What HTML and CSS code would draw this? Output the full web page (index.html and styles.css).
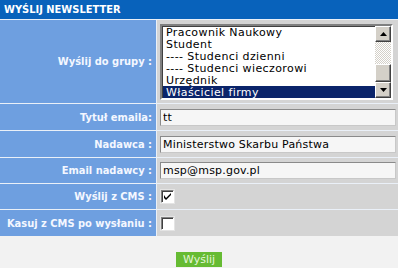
FILE: index.html
```html
<!DOCTYPE html>
<html lang="pl">

<head>
    <meta charset="UTF-8">
    <title>Wyślij newsletter</title>
    <link rel="stylesheet" href="styles.css">
</head>

<body>
    <div class="panel">
        <div class="panel-head">WYŚLIJ NEWSLETTER</div>

        <!-- Group list -->
        <div class="label">Wyślij do grupy :</div>
        <div class="field">
            <div class="listbox">
                <ul class="list-items">
                    <li>Pracownik Naukowy</li>
                    <li>Student</li>
                    <li>---- Studenci dzienni</li>
                    <li>---- Studenci wieczorowi</li>
                    <li>Urzędnik</li>
                    <li class="selected">Właściciel firmy</li>
                </ul>
                <div class="scrollbar">
                    <div class="sb-btn">
                        <svg width="7" height="4" viewBox="0 0 7 4"><path d="M3.5 0 L7 4 L0 4 Z" fill="#000"/></svg>
                    </div>
                    <div class="sb-track"></div>
                    <div class="sb-thumb"></div>
                    <div class="sb-btn">
                        <svg width="7" height="4" viewBox="0 0 7 4"><path d="M0 0 L7 0 L3.5 4 Z" fill="#000"/></svg>
                    </div>
                </div>
            </div>
        </div>

        <div class="label">Tytuł emaila:</div>
        <div class="field"><input type="text" class="text-input" value="tt"></div>

        <div class="label">Nadawca :</div>
        <div class="field"><input type="text" class="text-input" value="Ministerstwo Skarbu Państwa"></div>

        <div class="label">Email nadawcy :</div>
        <div class="field"><input type="text" class="text-input" value="msp@msp.gov.pl"></div>

        <div class="label">Wyślij z CMS :</div>
        <div class="field">
            <span class="checkbox">
                <svg width="7" height="7" viewBox="0 0 7 7"><path d="M0 2 L0 5 L2 7 L7 2 L7 0 L2 5 Z" fill="#000"/></svg>
            </span>
        </div>

        <div class="label">Kasuj z CMS po wysłaniu :</div>
        <div class="field"><span class="checkbox"></span></div>
    </div>

    <div class="actions">
        <button class="send-button">Wyślij</button>
    </div>
</body>

</html>
```

FILE: styles.css
```css
body {
    margin: 0;
    padding: 0;
    background-color: #f2f2f2;
    font-family: "DejaVu Sans", Verdana, sans-serif;
    font-size: 11px;
}

.panel {
    display: grid;
    grid-template-columns: 156px 1fr;
    grid-template-rows: 19px 83px 26px 26px 25px 25px 26px;
    gap: 1px;
    background-color: #eaf0f8;
}

.panel-head {
    grid-column: 1 / 3;
    background-color: #0862bb;
    color: #ffffff;
    font-family: "DejaVu Sans Condensed", "DejaVu Sans", sans-serif;
    font-weight: bold;
    font-size: 11px;
    padding-left: 4px;
    display: flex;
    align-items: center;
}

.label {
    background-color: #6e9fe0;
    color: #f4f7ff;
    font-family: "DejaVu Sans Condensed", "DejaVu Sans", sans-serif;
    font-weight: bold;
    font-size: 11px;
    display: flex;
    align-items: center;
    justify-content: flex-end;
    padding-right: 4px;
}

.field {
    background-color: #d4d4d4;
    display: flex;
    align-items: center;
    padding-left: 3px;
}

/* list box */
.listbox {
    display: flex;
    width: 229px;
    height: 72px;
    border: 2px solid;
    border-color: #808080 #ffffff #ffffff #808080;
    box-shadow: inset 1px 1px 0 #404040;
    background-color: #ffffff;
}

.list-items {
    flex: 1;
    list-style: none;
    margin: 0;
    padding: 0 0 0 1px;
    color: #000;
    letter-spacing: 0.4px;
}

.list-items li {
    height: 12px;
    line-height: 13px;
    padding-left: 3px;
    white-space: nowrap;
}

.list-items li.selected {
    background-color: #0a246a;
    color: #ffffff;
}

.scrollbar {
    width: 16px;
    display: flex;
    flex-direction: column;
}

.sb-btn,
.sb-thumb {
    box-sizing: border-box;
    height: 16px;
    background-color: #d4d0c8;
    border: 1px solid;
    border-color: #ffffff #404040 #404040 #ffffff;
    box-shadow: inset -1px -1px 0 #808080;
    display: flex;
    align-items: center;
    justify-content: center;
}

.sb-track {
    flex: 1;
    background-image: conic-gradient(#d4d0c8 25%, #ffffff 0 50%, #d4d0c8 0 75%, #ffffff 0);
    background-size: 2px 2px;
}

.sb-thumb {
    height: 18px;
}

/* inputs */
.text-input {
    box-sizing: border-box;
    width: 236px;
    height: 17px;
    margin: 0;
    padding: 0 2px;
    border: 1px solid;
    border-color: #8a8a8a #c8c8c8 #c8c8c8 #8a8a8a;
    background-color: #f6f6f6;
    font-family: "DejaVu Sans", Verdana, sans-serif;
    font-size: 11px;
    letter-spacing: 0.2px;
    color: #000;
}

.checkbox {
    box-sizing: border-box;
    width: 13px;
    height: 13px;
    margin-left: 1px;
    border: 1px solid;
    border-color: #808080 #ffffff #ffffff #808080;
    box-shadow: inset 1px 1px 0 #404040, 0 0 0 1px #e4e4e4;
    background-color: #ffffff;
    display: flex;
    align-items: center;
    justify-content: center;
}

.actions {
    display: flex;
    justify-content: center;
    padding-top: 16px;
}

.send-button {
    height: 15px;
    padding: 0 7px;
    border: none;
    background-color: #66bb33;
    color: #e4f6d8;
    font-family: "DejaVu Sans", Verdana, sans-serif;
    font-size: 11px;
    line-height: 15px;
}
```
